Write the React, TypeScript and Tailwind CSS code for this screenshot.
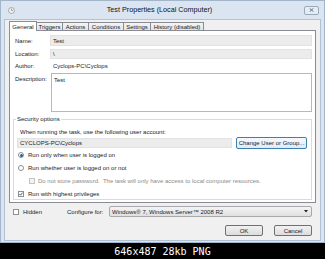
import React from 'react';

const tabs = [
  { label: 'Triggers', w: 'w-[26px]' },
  { label: 'Actions', w: 'w-[26px]' },
  { label: 'Conditions', w: 'w-[35px]' },
  { label: 'Settings', w: 'w-[27px]' },
  { label: 'History (disabled)', w: 'w-[53px]' },
];

const Radio = ({ checked }: { checked?: boolean }) => (
  <span className="w-[6px] h-[6px] rounded-full border border-[#8e8f8f] bg-white flex items-center justify-center shrink-0">
    {checked && <span className="w-[3px] h-[3px] rounded-full bg-[#2b5f94]" />}
  </span>
);

const Check = ({ checked, disabled }: { checked?: boolean; disabled?: boolean }) => (
  <span
    className={
      disabled
        ? 'w-[6px] h-[6px] border border-[#c4c4c4] bg-[#f4f4f4] flex items-center justify-center shrink-0'
        : 'w-[6px] h-[6px] border border-[#8e8f8f] bg-white flex items-center justify-center shrink-0'
    }
  >
    {checked && (
      <svg width="4" height="4" viewBox="0 0 4 4">
        <path d="M0.4 2 L1.5 3.2 L3.6 0.6" fill="none" stroke="#1f4f86" strokeWidth="0.9" />
      </svg>
    )}
  </span>
);

export default function App() {
  return (
    <div className="w-[325px] h-[259px] bg-black flex flex-col overflow-hidden font-['Liberation_Sans',Arial,sans-serif] text-[#1b1b1b]">
      {/* Window */}
      <div className="h-[243px] bg-[#dae5f1] border border-[#a3b5ca] flex flex-col px-[3px] pb-[1px]">
        {/* Title bar */}
        <div className="h-[18px] flex items-center">
          <svg width="7" height="7" viewBox="0 0 8 8" className="ml-[4px] shrink-0">
            <circle cx="4" cy="4" r="3.4" fill="#f3f3f3" stroke="#8a8f96" strokeWidth="0.8" />
            <path d="M4 1.8 V4 H5.8" fill="none" stroke="#7b6a4f" strokeWidth="0.7" />
          </svg>
          <div className="flex-1 text-center text-[7.2px] leading-none text-[#111]">
            Test Properties (Local Computer)
          </div>
          <div className="w-[15px] h-[9px] mr-[2px] border border-[#9aa9ba] rounded-[2px] bg-[#e4ecf5] flex items-center justify-center">
            <svg width="5" height="4" viewBox="0 0 5 4">
              <path d="M0.6 0.3 L4.4 3.7 M4.4 0.3 L0.6 3.7" stroke="#5b6573" strokeWidth="0.9" />
            </svg>
          </div>
        </div>

        {/* Client area */}
        <div className="flex-1 bg-[#f0f0f0] border border-[#b3c2d3] flex flex-col px-[4px] pt-[1px] text-[6px] leading-none">
          {/* Tabs */}
          <div className="flex items-end h-[10px] -mb-px relative z-10">
            <div className="w-[28px] h-[10px] bg-white border border-b-0 border-[#898c95] flex items-center justify-center">
              General
            </div>
            {tabs.map((t) => (
              <div
                key={t.label}
                className={`${t.w} h-[8px] mb-px border-t border-r border-[#898c95] bg-gradient-to-b from-[#f4f4f4] to-[#e4e4e4] flex items-center justify-center`}
              >
                {t.label}
              </div>
            ))}
          </div>

          {/* Tab panel */}
          <div className="h-[173px] bg-white border border-[#898c95] flex flex-col pt-[4px]">
            <div className="flex items-center h-[11px] pl-[5px] pr-[3px]">
              <span className="w-[35px]">Name:</span>
              <div className="flex-1 h-full bg-[#ececec] border border-[#e2e2e2] flex items-center pl-[2px]">Test</div>
            </div>
            <div className="flex items-center h-[10px] mt-[3px] pl-[5px] pr-[3px]">
              <span className="w-[35px]">Location:</span>
              <div className="flex-1 h-full bg-[#ececec] border border-[#e2e2e2] flex items-center pl-[2px]">\</div>
            </div>
            <div className="flex items-center h-[10px] mt-[2px] pl-[5px] pr-[3px]">
              <span className="w-[38px]">Author:</span>
              <span>Cyclops-PC\Cyclops</span>
            </div>
            <div className="flex items-start h-[39px] mt-[2px] pl-[5px] pr-[3px]">
              <span className="w-[36px] pt-[3px]">Description:</span>
              <div className="flex-1 h-full bg-white border border-[#b5b9bf] pl-[2px] pt-[3px]">Test</div>
            </div>

            {/* Security options */}
            <fieldset className="mx-[3px] mt-[3px] border border-[#d5dbe0] px-0 pb-0">
              <legend className="ml-[2px] px-[1px] h-[8px] leading-[8px]">Security options</legend>
              <div className="mt-[5px] h-[8px] flex items-center pl-[6px]">
                When running the task, use the following user account:
              </div>
              <div className="mt-[1px] h-[12px] flex items-center">
                <div className="ml-[3px] w-[215px] h-[10px] bg-[#ececec] border border-[#e2e2e2] flex items-center pl-[2px]">
                  CYCLOPS-PC\Cyclops
                </div>
                <div className="ml-[4px] w-[71px] h-[12px] rounded-[2px] border border-[#3c7fb1] bg-gradient-to-b from-[#f4f9fd] to-[#e1ebf4] flex items-center justify-center">
                  Change User or Group...
                </div>
              </div>
              <div className="mt-[1px] h-[10px] flex items-center pl-[4px] gap-[4px]">
                <Radio checked />
                <span>Run only when user is logged on</span>
              </div>
              <div className="mt-[3px] h-[10px] flex items-center pl-[4px] gap-[4px]">
                <Radio />
                <span>Run whether user is logged on or not</span>
              </div>
              <div className="mt-[3px] h-[10px] flex items-center pl-[15px] gap-[3px] text-[#8a8a8a]">
                <Check disabled />
                <span>Do not store password.&nbsp; The task will only have access to local computer resources.</span>
              </div>
              <div className="mt-[3px] h-[10px] flex items-center pl-[4px] gap-[4px]">
                <Check checked />
                <span>Run with highest privileges</span>
              </div>
            </fieldset>
          </div>

          {/* Hidden / configure */}
          <div className="mt-[3px] h-[11px] flex items-center">
            <span className="ml-[4px]">
              <Check />
            </span>
            <span className="ml-[4px] w-[44px]">Hidden</span>
            <span className="w-[42px]">Configure for:</span>
            <div className="w-[203px] h-[11px] border border-[#a9a9a9] rounded-[2px] bg-gradient-to-b from-[#f4f4f4] to-[#e0e0e0] flex items-center pl-[2px] pr-[3px]">
              <span className="flex-1">Windows® 7, Windows Server™ 2008 R2</span>
              <svg width="4" height="3" viewBox="0 0 4 3">
                <path d="M0 0 H4 L2 2.5 Z" fill="#222" />
              </svg>
            </div>
          </div>

          {/* Buttons */}
          <div className="mt-[8px] h-[11px] flex justify-end gap-[11px] pr-[4px]">
            <div className="w-[38px] h-full border border-[#707070] rounded-[2px] bg-gradient-to-b from-[#f2f2f2] to-[#dcdcdc] flex items-center justify-center">
              OK
            </div>
            <div className="w-[38px] h-full border border-[#707070] rounded-[2px] bg-gradient-to-b from-[#f2f2f2] to-[#dcdcdc] flex items-center justify-center">
              Cancel
            </div>
          </div>
        </div>
      </div>

      {/* Caption bar */}
      <div className="flex-1 flex items-center justify-center text-white text-[10px] font-['DejaVu_Sans_Mono',monospace]">
        646x487 28kb PNG
      </div>
    </div>
  );
}
